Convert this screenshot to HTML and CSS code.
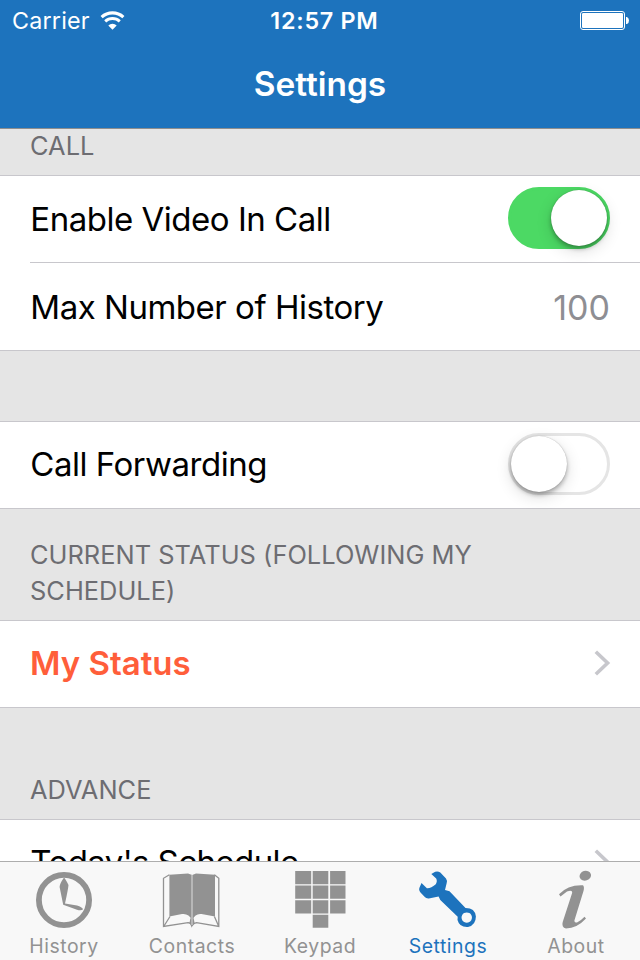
FILE: index.html
```html
<!DOCTYPE html>
<html lang="en">
<head>
<meta charset="utf-8">
<title>Settings</title>
<link rel="stylesheet" href="styles.css">
</head>
<body>
<div class="screen">
  <header class="navbar">
    <div class="status">
      <div class="carrier"><span class="carrier-name">Carrier</span>
        <svg class="wifi" width="26" height="20" viewBox="0 0 26 20"><g fill="none" stroke="#fff"><path d="M1.6 6.1a16.1 16.1 0 0 1 21.8 0" stroke-width="3.1"/><path d="M5.2 10.4a10.8 10.8 0 0 1 14.6 0" stroke-width="2.9"/></g><path d="M8.3 14.5a6.2 6.2 0 0 1 8.4 0L12.5 18.7z" fill="#fff"/></svg>
      </div>
      <span class="time">12:57 PM</span>
      <svg class="battery" width="50" height="20" viewBox="0 0 50 20"><rect x=".5" y=".5" width="44" height="18" rx="2.5" fill="none" stroke="#fff"/><rect x="2" y="2" width="41" height="15" rx="1.2" fill="#fff"/><path d="M46 6h1q2 1 2 3.5t-2 3.5h-1z" fill="#fff"/></svg>
    </div>
    <h1 class="title">Settings</h1>
  </header>
  <main class="list">
    <h2 class="section section-call">CALL</h2>
    <div class="group">
      <div class="row"><span class="label label-first">Enable Video In Call</span><span class="switch on"><span class="knob"></span></span></div>
      <div class="row inset"><span class="label">Max Number of History</span><span class="value">100</span></div>
    </div>
    <div class="gap"></div>
    <div class="group">
      <div class="row"><span class="label">Call Forwarding</span><span class="switch"><span class="knob"></span></span></div>
    </div>
    <h2 class="section section-status">CURRENT STATUS (FOLLOWING MY<br>SCHEDULE)</h2>
    <div class="group">
      <div class="row"><span class="accent">My Status</span><svg class="chevron" width="17" height="26" viewBox="0 0 17 26"><path d="M1.8 1.8L13.6 13 1.8 24.2" fill="none" stroke="#c7c7cc" stroke-width="3.6"/></svg></div>
    </div>
    <h2 class="section section-advance">ADVANCE</h2>
    <div class="group">
      <div class="row"><span class="label label-schedule">Today's Schedule</span><svg class="chevron" width="17" height="26" viewBox="0 0 17 26"><path d="M1.8 1.8L13.6 13 1.8 24.2" fill="none" stroke="#c7c7cc" stroke-width="3.6"/></svg></div>
    </div>
  </main>
  <nav class="tabs">
    <div class="tab"><svg width="60" height="60" viewBox="0 0 60 60"><circle cx="30" cy="30" r="25.1" fill="none" stroke="#929292" stroke-width="5.8"/><path d="M30 7.5Q31 8 34.5 15 34 20 31 33.5L43 35.4Q48 37 49.2 39.2 47 41 43 39.7L29.2 34.7 25.6 17Q25.5 14 30 7.5z" fill="#929292"/></svg><span>History</span></div>
    <div class="tab"><svg width="60" height="60" viewBox="0 0 60 60"><path d="M7.4 4.8L26 3.4 30.2 5V50Q26.5 43 20 44L7.4 46.5zM53 4.8L34 3.4 30.2 5V50Q33.5 43 39.5 44L53 46.5z" fill="#929292"/><path d="M7.4 4.8L1.5 8.3V56.4L26 52.7Q29 53 29.8 56Q31.5 53 34.5 52.7L56.8 56.4V8.3L52.4 4.8M2 56L8 46.5M56.6 56L52.4 46.5" fill="none" stroke="#929292" stroke-width="1.3"/><path d="M27.5 53Q28.2 48 30 45 31.8 48 32.6 53L30 56z" fill="#929292"/><path d="M30 5V55" stroke="#c8c8c8" stroke-width="1.4"/></svg><span>Contacts</span></div>
    <div class="tab"><svg width="60" height="60" viewBox="0 0 60 60"><path d="M5.2 1h16v13.2h-16zM22.7 1h15.6v13.2H22.7zM40.1 1h15.4v13.2H40.1zM5.2 15.6h16v13.2h-16zM22.7 15.6h15.6v13.2H22.7zM40.1 15.6h15.4v13.2H40.1zM5.2 30.2h16v13.2h-16zM22.7 30.2h15.6v13.2H22.7zM40.1 30.2h15.4v13.2H40.1zM22.7 44.8h15.6v13h-15.6z" fill="#929292"/></svg><span>Keypad</span></div>
    <div class="tab active"><svg width="60" height="60" viewBox="0 0 60 60"><path fill="#1d73bd" fill-rule="evenodd" d="M13.3 4.1L17.2 1.8Q20 1 22.3 2.5L28 8.4Q29.4 10.4 28.7 13L27 20 31.5 21.2 47.5 38.1Q57 38 57.9 46.5 57.9 55 50 57 41.5 57.6 39.5 50L39.7 46.7 22.3 30 20.6 26.4 10.8 28.4Q8 28.6 6.8 27L2.5 22.5Q0 19.8 2.1 16.3L3.5 13 8.9 18.2Q13 18.5 17.5 14.6 19.7 11.5 18.2 8.6zM48.7 42.4a5.2 5.2 0 1 0 .1 0z"/></svg><span>Settings</span></div>
    <div class="tab"><svg width="60" height="60" viewBox="0 0 60 60"><ellipse cx="39.3" cy="5.7" rx="5.8" ry="4.9" transform="rotate(-18 39.3 5.7)" fill="#929292"/><path d="M13 24.2Q22 14.5 37 15.2 38.6 17 37.5 21L28.4 50.5Q28.3 53.3 31 52.4 35 50.7 38.5 46.8L40 48.4Q31 58.2 20 58.5 15.2 57.3 16.7 52L26.2 22.8Q26.5 19.5 21 21.6L14.5 26.6z" fill="#929292"/></svg><span>About</span></div>
  </nav>
</div>
</body>
</html>
```

FILE: styles.css
```css
* { box-sizing: border-box; }
body { margin: 0; font-family: Inter, "Liberation Sans", sans-serif; }
h1, h2 { margin: 0; font-weight: 400; }
svg { display: block; flex: none; }
.screen { width: 640px; height: 960px; overflow: hidden; display: flex; flex-direction: column; background: #e5e5e5; }
.navbar { height: 129px; flex: none; background: #1d73bd; border-bottom: 1px solid #8e8e8e; color: #fff; }
.status { height: 40px; display: grid; grid-template-columns: 1fr auto 1fr; align-items: center; padding: 0 10px 0 12px; font-size: 23.3px; }
.carrier { display: flex; align-items: center; gap: 10px; }
.carrier-name { letter-spacing: .2px; }
.wifi { margin-top: 1px; }
.time { font-weight: 600; letter-spacing: .75px; padding-left: 7px; }
.battery { justify-self: end; margin-top: 2px; }
.title { height: 88px; display: flex; align-items: center; justify-content: center; font-size: 33.4px; font-weight: 600; }
.list { flex: 1; min-height: 0; overflow: hidden; }
.section { padding-left: 30px; font-size: 25.4px; line-height: 36px; letter-spacing: .03px; color: #6d6d72; }
.section-call { height: 46px; line-height: 34px; }
.section-status { height: 111px; padding-top: 28px; }
.section-advance { height: 111px; padding-top: 64px; }
.group { background: #fff; border-top: 1px solid #c8c7cc; border-bottom: 1px solid #c8c7cc; }
.row { height: 86px; margin-left: 30px; padding: 0 30px 2px 0; display: flex; align-items: center; justify-content: space-between; font-size: 33px; white-space: nowrap; }
.label { letter-spacing: -.48px; padding-left: .3px; }
.label-first { padding-top: 2px; }
.label-schedule { letter-spacing: -.58px; }
.inset { height: 88px; padding-bottom: 0; border-top: 1px solid #c8c7cc; }
.gap { height: 70px; }
.value { color: #8e8e93; font-size: 34px; padding-top: 2px; }
.accent { color: #ff5e3a; font-weight: 600; }
.chevron { margin-right: -1px; }
.switch { width: 102px; height: 62px; border-radius: 31px; border: 3px solid #e5e5e5; display: flex; }
.switch.on { background: #4cd964; border-color: #4cd964; justify-content: flex-end; }
.knob { width: 56px; height: 56px; border-radius: 50%; background: #fff; box-shadow: 0 5px 16px rgba(0,0,0,.14), 0 3px 4px rgba(0,0,0,.28), 0 0 1px rgba(0,0,0,.3); }
.tabs { height: 99px; flex: none; border-top: 1px solid #adadad; background: #f8f8f8; display: grid; grid-template-columns: repeat(5, 128px); }
.tab { display: flex; flex-direction: column; align-items: center; padding-top: 8px; color: #929292; font-size: 19.4px; line-height: 32px; letter-spacing: .55px; }
.tab.active { color: #1d73bd; }
```
